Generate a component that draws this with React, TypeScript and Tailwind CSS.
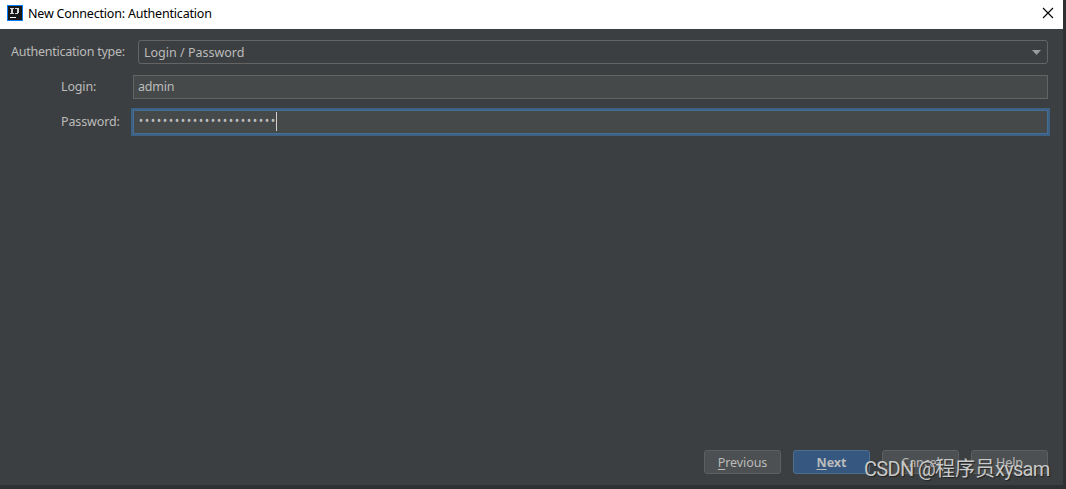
import type { ReactNode } from 'react';
import clsx from 'clsx';

const PASSWORD_LENGTH = 23;

const AppIcon = () => (
  <svg className="h-4 w-4 shrink-0" viewBox="0 0 16 16" shapeRendering="crispEdges">
    <rect width="16" height="16" fill="#087cfa" />
    <rect x="1" y="1" width="14" height="14" fill="#181818" />
    <path
      d="M3 3h4v1H3zM4 4h2v4H4zM3 8h4v1H3zM8 3h4v1H8zM10 4h2v4h-2zM8 8h3v1H8z"
      fill="#d4d4d4"
    />
    <rect x="3" y="12" width="6" height="1" fill="#fff" />
  </svg>
);

const TitleBar = () => (
  <header className="flex h-[29px] items-center bg-white pr-[9px] pb-[3px] pl-[7px] text-black">
    <AppIcon />
    <h1 className="mt-px ml-[5px] flex-1 leading-4 tracking-[-0.19px]">New Connection: Authentication</h1>
    <button type="button" aria-label="Close" className="h-3 w-3">
      <svg className="h-3 w-3" viewBox="0 0 12 12" fill="none" stroke="#000" strokeWidth="1.1">
        <path d="M1 1l10 10M11 1L1 11" />
      </svg>
    </button>
  </header>
);

interface FieldRowProps {
  label: string;
  labelClass: string;
  children: ReactNode;
}

const FieldRow = ({ label, labelClass, children }: FieldRowProps) => (
  <div className="flex h-6 items-center">
    <span className={clsx('shrink-0 pb-px leading-[23px] whitespace-nowrap', labelClass)}>{label}</span>
    {children}
  </div>
);

interface DialogButtonProps {
  label: string;
  mnemonic?: boolean;
  primary?: boolean;
}

const DialogButton = ({ label, mnemonic, primary }: DialogButtonProps) => (
  <button
    type="button"
    className={clsx(
      'flex h-6 w-[77px] items-center justify-center rounded-[3px] border pt-[3px] leading-none',
      primary ? 'border-[#4c708c] bg-[#365880] font-bold' : 'border-[#5e6060] bg-[#4c5052] tracking-[-0.1px]',
    )}
  >
    {mnemonic ? (
      <span>
        <span className="underline underline-offset-2">{label[0]}</span>
        {label.slice(1)}
      </span>
    ) : (
      label
    )}
  </button>
);

const App = () => {
  return (
    <div className="relative h-[489px] w-[1066px] overflow-hidden bg-[#2e3032] font-['Noto_Sans','Noto_Sans_CJK_SC',sans-serif] text-[12.5px] text-[#bbbbbb]">
      <main className="flex h-[485px] w-[1063px] flex-col bg-[#3c3f41]">
        <TitleBar />

        {/* Credentials */}
        <form className="flex flex-1 flex-col gap-[11px] pt-[11px] pr-[15px]">
          <FieldRow label="Authentication type:" labelClass="w-[138px] pl-[11px] tracking-[-0.24px]">
            <div className="flex h-6 flex-1 items-center justify-between rounded-[3px] border border-[#646464] pr-[6px] pl-[5px]">
              <span className="pt-[3px]">Login / Password</span>
              <svg className="h-[5px] w-[9px]" viewBox="0 0 9 5" fill="#9a9da0">
                <path d="M0 0h9L4.5 5z" />
              </svg>
            </div>
          </FieldRow>
          <FieldRow label="Login:" labelClass="w-[133px] pl-[61px] tracking-[-0.15px]">
            <div className="flex h-6 flex-1 items-center border border-[#646464] bg-[#45494a] pl-1 tracking-[-0.2px]">
              admin
            </div>
          </FieldRow>
          <FieldRow label="Password:" labelClass="w-[133px] pl-[61px] tracking-[-0.12px]">
            <div className="flex h-6 flex-1 items-center border border-[#466d94] bg-[#45494a] pl-1 ring-2 ring-[#3d6185]">
              <span className="flex h-full items-center pb-[2px] text-[12px]">
                {Array.from({ length: PASSWORD_LENGTH }, (_, i) => (
                  <span key={i} className="w-[6px] text-center">
                    •
                  </span>
                ))}
              </span>
              <span className="mb-px h-[19px] w-px bg-[#d0d0d0]" />
            </div>
          </FieldRow>
        </form>

        <footer className="flex justify-end gap-3 pr-[15px] pb-[11px]">
          <DialogButton label="Previous" mnemonic />
          <DialogButton label="Next" mnemonic primary />
          <DialogButton label="Cancel" />
          <DialogButton label="Help" />
        </footer>
      </main>

      {/* Watermark */}
      <div className="absolute top-[456px] left-[864px] font-[Roboto,'Noto_Sans_CJK_SC',sans-serif] text-[20px] leading-[26px] tracking-[-0.7px] whitespace-nowrap text-[#c8c9c9] [text-shadow:1px_1px_1px_#222]">
        CSDN @<span className="tracking-normal">程序员</span>xysam
      </div>
    </div>
  );
};

export default App;
